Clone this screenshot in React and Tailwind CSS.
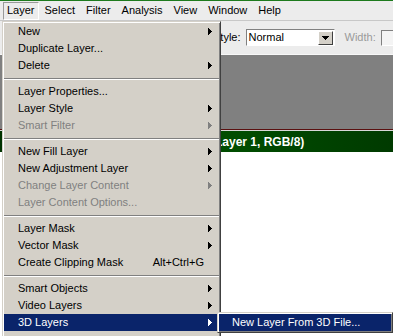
import React from "react";

const Arrow = ({ color }) => (
  <svg width="4" height="7" viewBox="0 0 4 7" shapeRendering="crispEdges">
    <path d="M0 0h1v1h1v1h1v1h1v1h-1v1h-1v1h-1v1h-1z" fill={color} />
  </svg>
);

const DownArrow = () => (
  <svg width="7" height="4" viewBox="0 0 7 4" shapeRendering="crispEdges">
    <path d="M0 0h7v1h-1v1h-1v1h-1v1h-1v-1h-1v-1h-1v-1h-1z" fill="#000" />
  </svg>
);

const menuItems = [
  { label: "New", sub: true },
  { label: "Duplicate Layer..." },
  { label: "Delete", sub: true },
  "sep",
  { label: "Layer Properties..." },
  { label: "Layer Style", sub: true },
  { label: "Smart Filter", sub: true, disabled: true },
  "sep",
  { label: "New Fill Layer", sub: true },
  { label: "New Adjustment Layer", sub: true },
  { label: "Change Layer Content", sub: true, disabled: true },
  { label: "Layer Content Options...", disabled: true },
  "sep",
  { label: "Layer Mask", sub: true },
  { label: "Vector Mask", sub: true },
  { label: "Create Clipping Mask", shortcut: "Alt+Ctrl+G" },
  "sep",
  { label: "Smart Objects", sub: true },
  { label: "Video Layers", sub: true },
  { label: "3D Layers", sub: true, active: true },
];

const topMenu = ["Layer", "Select", "Filter", "Analysis", "View", "Window", "Help"];

function MenuRow({ item }) {
  const text = item.active ? "text-white" : item.disabled ? "text-[#808080]" : "text-black";
  const arrowColor = item.active ? "#fff" : item.disabled ? "#808080" : "#000";
  return (
    <div className={`flex h-[17px] items-center pl-[14px] pr-[7px] ${item.active ? "bg-[#0a246a]" : ""} ${text}`}>
      <span className="whitespace-nowrap">{item.label}</span>
      <span className="flex-1" />
      {item.shortcut && <span className="mr-[4px] whitespace-nowrap">{item.shortcut}</span>}
      <span className="flex w-[4px] items-center">{item.sub && <Arrow color={arrowColor} />}</span>
    </div>
  );
}

export default function App() {
  return (
    <div className="relative h-[336px] w-[393px] overflow-hidden bg-[#ececec] font-['Liberation_Sans',Arial,sans-serif] text-[11px] leading-none">
      {/* window edge */}
      <div className="h-px bg-[#1d7a1d]" />

      {/* menu bar */}
      <div className="flex h-[19px] items-center pl-[3px] text-black">
        {topMenu.map((m, i) => (
          <div
            key={m}
            className={
              i === 0
                ? "flex h-[18px] items-center border border-b-white border-l-[#9a9a9a] border-r-white border-t-[#9a9a9a] px-[3px]"
                : "ml-[1px] flex h-[18px] items-center px-[5px]"
            }
          >
            {m}
          </div>
        ))}
      </div>
      <div className="h-px bg-[#c8c8c8]" />

      {/* options bar */}
      <div className="flex h-[33px] items-center pl-[213px] text-black">
        <span className="shrink-0">Style:</span>
        <div className="ml-[5px] flex h-[17px] w-[89px] shrink-0 items-center border border-b-white border-l-[#808080] border-r-white border-t-[#808080] bg-white">
          <span className="flex-1 pl-[2px]">Normal</span>
          <div className="mr-px flex h-[14px] w-[15px] items-center justify-center border border-b-[#404040] border-l-white border-r-[#404040] border-t-white bg-[#d4d0c8]">
            <DownArrow />
          </div>
        </div>
        <span className="ml-[10px] shrink-0 text-[#9a9a9a]">Width:</span>
        <div className="ml-[5px] h-[16px] w-[40px] shrink-0 border border-b-white border-l-[#808080] border-r-white border-t-[#808080] bg-[#f4f4f4]" />
      </div>
      <div className="h-px bg-[#f8f8f8]" />

      {/* workspace */}
      <div className="h-[74px] bg-[#808080]" />
      <div className="h-px bg-[#5a1010]" />
      <div className="h-px bg-[#d8d8d8]" />
      <div className="flex h-[21px] items-center whitespace-nowrap bg-[linear-gradient(90deg,#003300,#004d00_60%,#003a00)] pl-[211px] text-[12px] font-bold text-white">
        (Layer 1, RGB/8)
      </div>
      <div className="h-[200px] bg-white" />

      {/* Layer dropdown */}
      <div className="absolute left-[2px] top-[21px] w-[219px] border border-b-[#404040] border-l-[#d4d0c8] border-r-[#404040] border-t-[#d4d0c8] bg-[#d4d0c8] p-px shadow-[inset_1px_1px_0_#fff,inset_-1px_-1px_0_#808080]">
        {menuItems.map((item, i) =>
          item === "sep" ? (
            <div key={i} className="flex h-[9px] items-center">
              <div className="h-[2px] w-full border-b border-t border-b-white border-t-[#808080]" />
            </div>
          ) : (
            <MenuRow key={i} item={item} />
          )
        )}
        <div className="h-[17px]" />
      </div>

      {/* 3D Layers submenu */}
      <div className="absolute left-[217px] top-[312px] w-[176px] border border-b-[#404040] border-l-[#d4d0c8] border-r-[#404040] border-t-[#d4d0c8] bg-[#d4d0c8] p-px shadow-[inset_1px_1px_0_#fff,inset_-1px_-1px_0_#808080]">
        <div className="flex h-[17px] items-center whitespace-nowrap bg-[#0a246a] pl-[13px] text-white">
          New Layer From 3D File...
        </div>
      </div>
    </div>
  );
}
